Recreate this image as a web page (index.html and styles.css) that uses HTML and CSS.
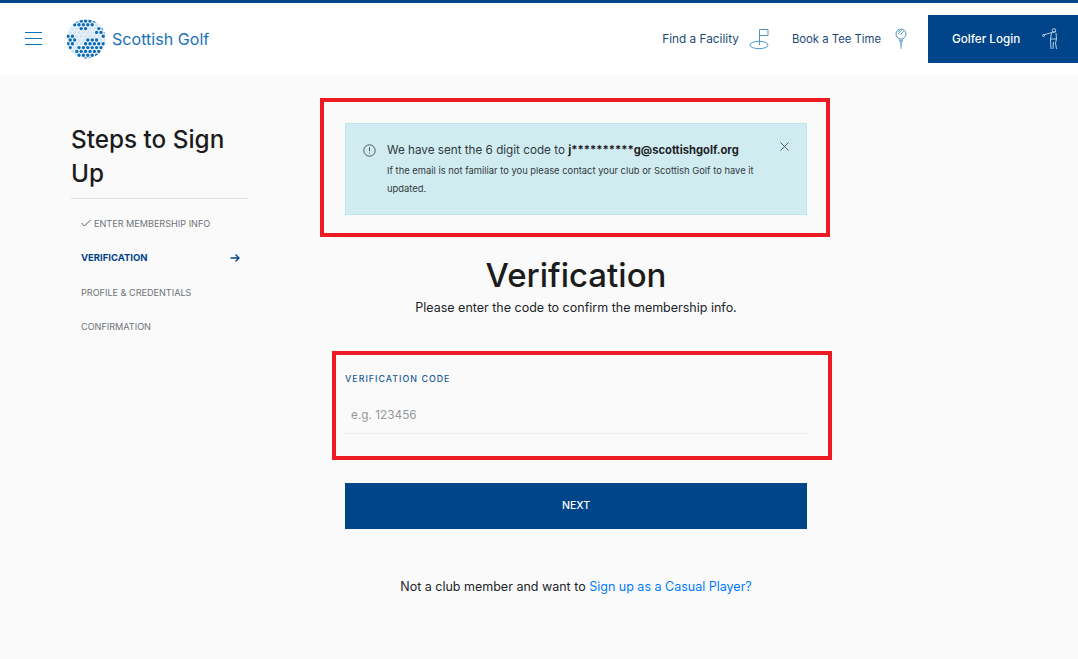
FILE: index.html
```html
<!DOCTYPE html>
<html lang="en">
<head>
    <meta charset="UTF-8">
    <meta name="viewport" content="width=device-width, initial-scale=1.0">
    <title>Scottish Golf - Verification</title>
    <link rel="stylesheet" href="styles.css">
</head>
<body>

    <!-- Top bar -->
    <header class="topbar">
        <div class="topbar-left">
            <button class="burger" aria-label="Menu"><span></span><span></span><span></span></button>
            <a class="brand" href="#">
                <svg class="brand-ball" viewBox="0 0 40 40" width="40" height="40" fill="none" stroke-linecap="round">
                    <defs>
                        <clipPath id="ball"><circle cx="20" cy="20" r="19.5"/></clipPath>
                    </defs>
                    <g clip-path="url(#ball)">
                        <rect width="40" height="40" fill="#eaf3fa"/>
                        <!-- dimples, the light ones make the saltire -->
                        <path stroke="#d3e5f4" stroke-width="3.4" d="M2 2h0M6.400 2h0M10.800 2h0M15.200 2h0M19.600 2h0M24 2h0M28.400 2h0M32.800 2h0M37.200 2h0
                            M4.200 5.800h0M8.600 5.800h0M13 5.800h0M17.400 5.800h0M21.800 5.800h0M26.200 5.800h0M30.600 5.800h0M35 5.800h0M39.400 5.800h0
                            M2 9.600h0M6.400 9.600h0M10.800 9.600h0M15.200 9.600h0M19.600 9.600h0M24 9.600h0M28.400 9.600h0M32.800 9.600h0M37.200 9.600h0
                            M4.200 13.400h0M8.600 13.400h0M13 13.400h0M17.400 13.400h0M21.800 13.400h0M26.200 13.400h0M30.600 13.400h0M35 13.400h0M39.400 13.400h0
                            M2 17.200h0M6.400 17.200h0M10.800 17.200h0M15.200 17.200h0M19.600 17.200h0M24 17.200h0M28.400 17.200h0M32.800 17.200h0M37.200 17.200h0
                            M4.200 21h0M8.600 21h0M13 21h0M17.400 21h0M21.800 21h0M26.200 21h0M30.600 21h0M35 21h0M39.400 21h0
                            M2 24.800h0M6.400 24.800h0M10.800 24.800h0M15.200 24.800h0M19.600 24.800h0M24 24.800h0M28.400 24.800h0M32.800 24.800h0M37.200 24.800h0
                            M4.200 28.600h0M8.600 28.600h0M13 28.600h0M17.400 28.600h0M21.800 28.600h0M26.200 28.600h0M30.600 28.600h0M35 28.600h0M39.400 28.600h0
                            M2 32.400h0M6.400 32.400h0M10.800 32.400h0M15.200 32.400h0M19.600 32.400h0M24 32.400h0M28.400 32.400h0M32.800 32.400h0M37.200 32.400h0
                            M4.200 36.200h0M8.600 36.200h0M13 36.200h0M17.400 36.200h0M21.800 36.200h0M26.200 36.200h0M30.600 36.200h0M35 36.200h0"/>
                        <path stroke="#0f6cb6" stroke-width="3.400" d="M10.800 2h0M15.200 2h0M19.600 2h0M24 2h0M28.400 2h0
                            M8.600 5.800h0M13 5.800h0M17.400 5.800h0M21.800 5.800h0M26.200 5.800h0M15.200 9.600h0M19.600 9.600h0
                            M32.800 9.600h0M37.200 9.600h0M30.600 13.400h0M35 13.400h0M39.400 13.400h0M37.200 17.200h0
                            M2 17.200h0M6.400 17.200h0M4.200 21h0M8.600 21h0M2 24.800h0M6.400 24.800h0M4.200 28.600h0
                            M21.800 21h0M26.200 21h0M30.600 21h0
                            M19.600 24.800h0M24 24.800h0M28.400 24.800h0M32.800 24.800h0M37.200 24.800h0
                            M13 28.600h0M17.400 28.600h0M21.800 28.600h0M26.200 28.600h0M30.600 28.600h0M35 28.600h0
                            M10.800 32.400h0M15.200 32.400h0M19.600 32.400h0M24 32.400h0M28.400 32.400h0M32.800 32.400h0
                            M13 36.200h0M17.400 36.200h0M21.800 36.200h0M26.200 36.200h0M30.600 36.200h0M19.600 40h0M24 40h0"/>
                    </g>
                </svg>
                <span>Scottish Golf</span>
            </a>
        </div>
        <nav class="topnav">
            <a class="topnav-link" href="#">Find a Facility
                <svg width="22" height="22" viewBox="0 0 22 22" fill="none" stroke="#4f94c9" stroke-width="1">
                    <ellipse cx="10" cy="17" rx="9" ry="3.7"/>
                    <path d="M10.500 17V1.500H19V7.500H10.500"/>
                </svg>
            </a>
            <a class="topnav-link topnav-tee" href="#">Book a Tee Time
                <svg width="12" height="22" viewBox="0 0 12 22" fill="none" stroke="#4f94c9" stroke-width="1">
                    <circle cx="6" cy="6" r="5"/>
                    <path d="M3 4l2-2M3 6l4-4M5 7l4-4" stroke-width="0.800"/>
                    <path d="M3.500 11.500h5l-1.500 3-0.500 6.500h-1l-0.500-6.500z" fill="#7db3dc" stroke="none"/>
                </svg>
            </a>
            <a class="login" href="#">Golfer Login
                <svg width="16" height="22" viewBox="0 0 16 22" fill="none" stroke="#c8dcec" stroke-width="0.900">
                    <circle cx="12" cy="2.500" r="1.800"/>
                    <path d="M1.500 7C5 6 9 4.500 14 3.500"/>
                    <circle cx="1.500" cy="7.500" r="1"/>
                    <path d="M9.500 5l-1 6 0.500 10M14 5l0.500 6-1 4 1 6M9 11h5M11.500 14l-0.500 7"/>
                </svg>
            </a>
        </nav>
    </header>

    <div class="page">
        <!-- Steps sidebar -->
        <aside class="steps">
            <h2 class="steps-title">Steps to Sign Up</h2>
            <ul class="steps-list">
                <li class="step">
                    <span><svg class="step-check" width="10" height="8" viewBox="0 0 10 8" fill="none" stroke="#555c66" stroke-width="1"><path d="M0.500 4l3 3 6-6"/></svg>Enter Membership Info</span>
                </li>
                <li class="step active">
                    <span>Verification</span>
                    <svg width="10" height="10" viewBox="0 0 10 10" fill="none" stroke="#004489" stroke-width="1.300"><path d="M0.500 5h8.500M5.500 1.500L9 5 5.500 8.500"/></svg>
                </li>
                <li class="step"><span>Profile &amp; Credentials</span></li>
                <li class="step"><span>Confirmation</span></li>
            </ul>
        </aside>

        <!-- Main form -->
        <main class="content">
            <div class="marked marked-alert">
                <div class="alert">
                    <svg class="alert-icon" width="13" height="13" viewBox="0 0 13 13" fill="none" stroke="#4c5a60" stroke-width="1">
                        <circle cx="6.500" cy="6.500" r="5.700"/>
                        <path d="M6.500 3.200v4M6.500 8.700v1"/>
                    </svg>
                    <div class="alert-text">
                        <p class="alert-main">We have sent the 6 digit code to <b>j**********g@scottishgolf.org</b></p>
                        <p class="alert-sub">If the email is not familiar to you please contact your club or Scottish Golf to have it updated.</p>
                    </div>
                    <svg class="alert-close" width="9" height="9" viewBox="0 0 9 9" stroke="#3b4a6b" stroke-width="0.900"><path d="M0.500 0.500l8 8M8.500 0.500l-8 8"/></svg>
                </div>
            </div>

            <h1 class="title">Verification</h1>
            <p class="subtitle">Please enter the code to confirm the membership info.</p>

            <div class="marked marked-field">
                <label class="field-label" for="code">Verification Code</label>
                <input class="field-input" id="code" type="text" placeholder="e.g. 123456">
            </div>

            <button class="next">Next</button>

            <p class="casual">Not a club member and want to <a href="#">Sign up as a Casual Player?</a></p>
        </main>
    </div>

</body>
</html>
```

FILE: styles.css
```css
* {
    box-sizing: border-box;
}

body {
    margin: 0;
    height: 659px;
    overflow: hidden;
    background-color: #fafafa;
    font-family: "Inter", "Liberation Sans", sans-serif;
    color: #212529;
}

a {
    text-decoration: none;
}

/* Top bar */
.topbar {
    display: flex;
    justify-content: space-between;
    align-items: center;
    height: 75px;
    background: #fff;
    border-top: 3px solid #004489;
}

.topbar-left {
    display: flex;
    align-items: center;
    padding-left: 25px;
}

.burger {
    display: flex;
    flex-direction: column;
    gap: 5px;
    width: 17px;
    margin-bottom: 2px;
    padding: 0;
    border: 0;
    background: none;
}

.burger span {
    height: 1px;
    width: 100%;
    background: #0f72bd;
}

.brand {
    display: flex;
    align-items: center;
    gap: 6px;
    margin-left: 24px;
    font-size: 16.1px;
    color: #1a72b8;
}

.topnav {
    display: flex;
    align-items: center;
}

.topnav-link {
    display: flex;
    align-items: center;
    gap: 10px;
    margin-right: 21px;
    font-size: 11.8px;
    color: #1c4a78;
}

.topnav-tee {
    gap: 14px;
    font-size: 11.3px;
}

.login {
    display: flex;
    justify-content: space-between;
    align-items: center;
    width: 150px;
    height: 48px;
    padding: 0 20px 0 24px;
    background: #004489;
    color: #fff;
    font-size: 11.7px;
    font-weight: 500;
}

/* Page columns */
.page {
    display: flex;
    padding-left: 71px;
}

.steps {
    width: 177px;
    padding-top: 47px;
}

.steps-title {
    margin: 0;
    padding-bottom: 8px;
    border-bottom: 1px solid #e0e0e0;
    font-size: 24.3px;
    font-weight: 500;
    line-height: 34px;
    color: #1c1c1c;
}

.steps-list {
    margin: 0;
    padding: 7.5px 8px 0 10px;
    list-style: none;
}

.step {
    display: flex;
    justify-content: space-between;
    align-items: center;
    height: 34.300px;
    font-size: 9.100px;
    text-transform: uppercase;
    color: #6e7278;
}

.step-check {
    margin-right: 3px;
}

.step.active {
    font-size: 9.500px;
    font-weight: 700;
    color: #004489;
}

.content {
    display: flex;
    flex-direction: column;
    align-items: center;
    width: 512px;
    margin-left: 72px;
    padding-top: 23px;
}

/* Red marks round the two boxes */
.marked {
    border: 4px solid #ed1c24;
}

.marked-alert {
    align-self: flex-start;
    width: 510px;
    height: 139px;
    padding: 21px 19px 0 21px;
}

.marked-field {
    width: 500px;
    height: 109px;
    margin-left: 12px;
    margin-top: 33px;
    padding: 18px 21px 0 9px;
}

.alert {
    display: flex;
    align-items: flex-start;
    height: 92px;
    padding: 19px 17px 0 17px;
    background: #d1ecf1;
    border: 1px solid #bee5eb;
}

.alert-icon {
    flex: none;
    margin-top: 1px;
}

.alert-text {
    flex: 1;
    margin-left: 11px;
}

.alert-main {
    margin: 0 0 4px;
    font-size: 11.7px;
    line-height: 15px;
    color: #2f3a40;
}

.alert-main b {
    font-size: 11.2px;
    color: #1d2326;
}

.alert-sub {
    margin: 0;
    font-size: 9.400px;
    line-height: 18px;
    color: #2f3a40;
}

.alert-close {
    flex: none;
    margin: -1.5px 0 0 5px;
}

.title {
    margin: 20px 0 0;
    font-size: 33px;
    font-weight: 500;
    line-height: 36px;
    color: #1c1c1c;
}

.subtitle {
    margin: 5px 0 0;
    font-size: 12.500px;
    line-height: 20px;
    color: #212529;
}

.field-label {
    display: block;
    font-size: 8.900px;
    font-weight: 500;
    letter-spacing: 1px;
    text-transform: uppercase;
    line-height: 12px;
    color: #1a5c96;
}

.field-input {
    display: block;
    width: 100%;
    height: 39px;
    margin-top: 10px;
    padding: 2px 6px 0;
    border: 0;
    border-bottom: 1px solid #ececec;
    background: transparent;
    font-family: inherit;
    font-size: 11.800px;
}

.field-input::placeholder {
    color: #96999c;
}

.next {
    width: 462px;
    height: 46px;
    margin-top: 23px;
    padding: 0 0 2px;
    border: 0;
    background: #004489;
    color: #fff;
    font-family: inherit;
    font-size: 10.500px;
    font-weight: 500;
    text-transform: uppercase;
}

.casual {
    margin: 49px 0 0;
    font-size: 12.500px;
    line-height: 18px;
    color: #212529;
}

.casual a {
    color: #007bff;
}
```
